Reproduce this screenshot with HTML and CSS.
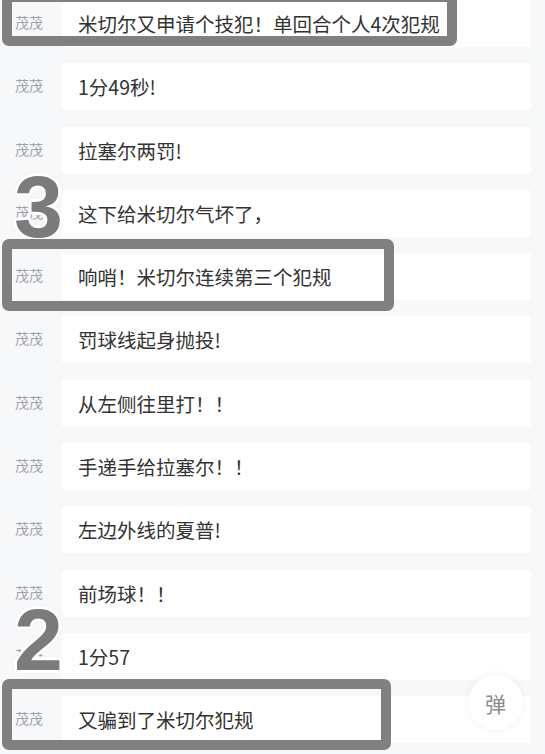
FILE: index.html
```html
<!DOCTYPE html>
<html lang="zh-CN">
<head>
    <meta charset="UTF-8">
    <meta name="viewport" content="width=device-width, initial-scale=1.0">
    <title>文字直播</title>
    <link rel="stylesheet" href="styles.css">
</head>
<body>

    <div class="live">
        <div class="msg">
            <span class="nick">茂茂</span>
            <div class="bubble">米切尔又申请个技犯！单回合个人4次犯规</div>
            <div class="mark mark-1"></div>
        </div>
        <div class="msg">
            <span class="nick">茂茂</span>
            <div class="bubble">1分49秒!</div>
        </div>
        <div class="msg">
            <span class="nick">茂茂</span>
            <div class="bubble">拉塞尔两罚!</div>
        </div>
        <div class="msg">
            <span class="nick">茂茂</span>
            <div class="bubble">这下给米切尔气坏了，</div>
            <div class="num num-3">3</div>
        </div>
        <div class="msg">
            <span class="nick">茂茂</span>
            <div class="bubble">响哨！米切尔连续第三个犯规</div>
            <div class="mark mark-2"></div>
        </div>
        <div class="msg">
            <span class="nick">茂茂</span>
            <div class="bubble">罚球线起身抛投!</div>
        </div>
        <div class="msg">
            <span class="nick">茂茂</span>
            <div class="bubble">从左侧往里打！！</div>
        </div>
        <div class="msg">
            <span class="nick">茂茂</span>
            <div class="bubble">手递手给拉塞尔！！</div>
        </div>
        <div class="msg">
            <span class="nick">茂茂</span>
            <div class="bubble">左边外线的夏普!</div>
        </div>
        <div class="msg">
            <span class="nick">茂茂</span>
            <div class="bubble">前场球！！</div>
        </div>
        <div class="msg">
            <span class="nick">茂茂</span>
            <div class="bubble">1分57</div>
            <div class="num num-2">2</div>
        </div>
        <div class="msg">
            <span class="nick">茂茂</span>
            <div class="bubble">又骗到了米切尔犯规</div>
            <div class="mark mark-3"></div>
        </div>

        <button class="danmu-btn">弹</button>
    </div>

</body>
</html>
```

FILE: styles.css
```css
/* Base styling */
body {
    font-family: "Noto Sans CJK SC", "Noto Sans", sans-serif;
    background-color: #f7f8fa;
    color: #333;
    margin: 0;
    padding: 0;
}

.live {
    position: relative;
    height: 754px;
    overflow: hidden;
    padding-right: 14px;
}

.msg {
    position: relative;
    display: flex;
    height: 47px;
    margin-bottom: 16.3px;
}

.nick {
    width: 62px;
    flex-shrink: 0;
    box-sizing: border-box;
    padding: 12px 0 0 15px;
    font-size: 14px;
    line-height: 20px;
    color: #9ea2aa;
}

.bubble {
    flex: 1;
    display: flex;
    align-items: center;
    padding-left: 16px;
    background-color: #fff;
    border-radius: 3px;
    font-size: 19.5px;
    color: #333;
}

/* annotation boxes over the feed */
.mark {
    position: absolute;
    left: 2px;
    box-sizing: border-box;
    border: 10px solid #808080;
    border-radius: 7px;
}

.mark-1 {
    top: -8px;
    width: 455px;
    height: 54px;
}

.mark-2 {
    top: -14px;
    width: 392px;
    height: 72px;
}

.mark-3 {
    top: -17px;
    width: 389px;
    height: 71px;
}

.num {
    position: absolute;
    left: 14px;
    font-family: "Liberation Sans", Arial, sans-serif;
    font-weight: bold;
    font-size: 88px;
    line-height: 1;
    color: #7b7b7b;
    text-shadow:
        3px 0 #fff, -3px 0 #fff, 0 3px #fff, 0 -3px #fff,
        2px 2px #fff, -2px 2px #fff, 2px -2px #fff, -2px -2px #fff,
        0 0 5px rgba(0, 0, 0, 0.18);
}

.num-3 {
    top: -27px;
}

.num-2 {
    top: -37px;
}

.danmu-btn {
    position: absolute;
    top: 675px;
    right: 22px;
    width: 55px;
    height: 55px;
    border: none;
    border-radius: 50%;
    background-color: #fff;
    box-shadow: 0 0 8px rgba(0, 0, 0, 0.06);
    font-family: inherit;
    font-size: 21px;
    color: #8c8c8c;
    padding: 0;
}
```
